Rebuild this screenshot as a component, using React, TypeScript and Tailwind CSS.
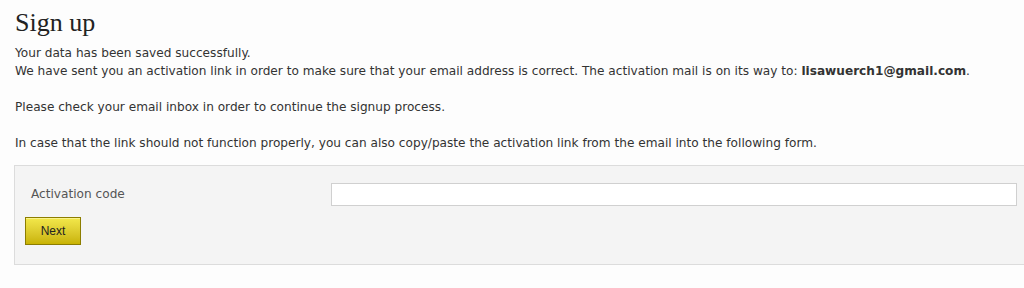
export default function App() {
  return (
    <div className="w-[1024px] h-[288px] overflow-hidden bg-[#fdfdfd] text-[#333]">
      <div className="pl-[15px] pt-[7px]">
        <h1 className="font-['Liberation_Serif',serif] text-[26px] leading-[32px] text-[#222]">
          Sign up
        </h1>
        <div className="mt-[5px] font-['DejaVu_Sans',sans-serif] text-[12.13px] leading-[18px] text-[#333]">
          <p>Your data has been saved successfully.</p>
          <p>
            We have sent you an activation link in order to make sure that your email address is
            correct. The activation mail is on its way to: <b>lisawuerch1@gmail.com</b>.
          </p>
          <p className="mt-[18px]">Please check your email inbox in order to continue the signup process.</p>
          <p className="mt-[18px]">
            In case that the link should not function properly, you can also copy/paste the
            activation link from the email into the following form.
          </p>
        </div>
      </div>

      {/* Form panel */}
      <div className="ml-[14px] mt-[13px] w-[1020px] h-[100px] border border-[#dcdcdc] bg-[#f4f4f4] pt-[17px] pl-[10px]">
        <div className="flex items-center">
          <label className="w-[306px] pl-[6px] font-['DejaVu_Sans',sans-serif] text-[12.13px] text-[#555]">
            Activation code
          </label>
          <input
            type="text"
            className="w-[686px] h-[23px] border border-[#d0d0d0] bg-white outline-none"
          />
        </div>
        <button
          type="button"
          className="mt-[11px] w-[56px] h-[28px] border border-[#8c7d00] bg-gradient-to-b from-[#f3e84a] to-[#c9b300] font-['Liberation_Sans',sans-serif] text-[12px] text-[#222] shadow-[inset_0_1px_0_#faf38a]"
        >
          Next
        </button>
      </div>
    </div>
  )
}
